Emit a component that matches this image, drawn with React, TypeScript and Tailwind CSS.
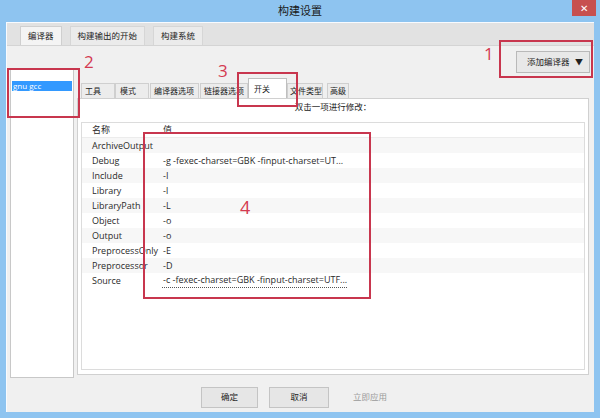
import React from "react";

const rows: [string, string][] = [
  ["ArchiveOutput", ""],
  ["Debug", "-g -fexec-charset=GBK -finput-charset=UT..."],
  ["Include", "-I"],
  ["Library", "-l"],
  ["LibraryPath", "-L"],
  ["Object", "-o"],
  ["Output", "-o"],
  ["PreprocessOnly", "-E"],
  ["Preprocessor", "-D"],
  ["Source", "-c -fexec-charset=GBK -finput-charset=UTF..."],
];

const font = { fontFamily: '"Open Sans","Noto Sans CJK SC",sans-serif' };

export default function App() {
  return (
    <div
      className="relative w-[600px] h-[418px] bg-[#8ec4f0] flex flex-col overflow-hidden text-[#222]"
      style={font}
    >
      {/* title bar */}
      <div className="h-[22px] flex items-start">
        <div className="w-[40px]" />
        <div className="flex-1 text-center text-[11px] leading-[22px] text-[#1a1a1a]">构建设置</div>
        <div className="w-[40px] h-[17px] flex justify-end pr-[4px]">
          <div className="w-[24px] h-[16px] bg-[#c7504f] flex items-center justify-center text-white text-[10px] leading-none">
            ✕
          </div>
        </div>
      </div>

      {/* body */}
      <div className="flex-1 mx-[6px] mb-[6px] bg-[#f0f0f0] border-l border-t border-[#f8fbff] flex flex-col">
        {/* top tabs */}
        <div className="h-[23px] bg-[#e2e2e2] flex items-end pl-[13px] gap-[8px] border-b border-[#d4d4d4] text-[8.5px] whitespace-nowrap">
          <div className="h-[19px] px-[7px] bg-[#f4f4f4] border border-b-0 border-[#cfcfcf] flex items-center">编译器</div>
          <div className="h-[19px] px-[7px] bg-[#ebebeb] border border-b-0 border-[#d6d6d6] flex items-center">构建输出的开始</div>
          <div className="h-[19px] px-[7px] bg-[#ebebeb] border border-b-0 border-[#d6d6d6] flex items-center">构建系统</div>
        </div>

        {/* outer panel */}
        <div className="flex-1 flex pl-[3px] pr-[3px]">
          {/* left list */}
          <div className="w-[64px] mt-[23px] mb-[2px] bg-white border border-[#c8c8c8] pt-[11px] px-[1px]">
            <div className="h-[10px] bg-[#3399ff] text-white text-[8px] leading-[10px] pl-[1px]">gnu gcc</div>
          </div>

          {/* right column */}
          <div className="flex-1 flex flex-col pl-[3px]">
            <div className="h-[27px] flex justify-end items-end pr-[1px]">
              <div className="w-[74px] h-[22px] bg-[#e8e8e8] border border-[#b9b9b9] flex items-center justify-between pl-[10px] pr-[6px] text-[8.5px]">
                <span>添加编译器</span>
                <span className="text-[8px]">▼</span>
              </div>
            </div>

            {/* inner tabs */}
            <div className="mt-[5px] h-[20px] flex items-end pl-[4px] text-[8px] whitespace-nowrap">
              <div className="h-[15px] w-[34px] bg-[#ececec] border border-b-0 border-[#cfcfcf] flex items-center pl-[3px]">工具</div>
              <div className="h-[15px] w-[34px] bg-[#ececec] border border-b-0 border-[#cfcfcf] flex items-center pl-[4px]">模式</div>
              <div className="h-[15px] w-[49px] ml-[1px] bg-[#ececec] border border-b-0 border-[#cfcfcf] flex items-center pl-[3px]">编译器选项</div>
              <div className="h-[15px] w-[48px] ml-[1px] bg-[#ececec] border border-b-0 border-[#cfcfcf] flex items-center pl-[3px]">链接器选项</div>
              <div className="h-[20px] w-[39px] bg-white border border-b-0 border-[#bfbfbf] flex items-center pl-[5px]">开关</div>
              <div className="h-[15px] w-[36px] bg-[#ececec] border border-b-0 border-[#cfcfcf] flex items-center pl-[2px]">文件类型</div>
              <div className="h-[15px] w-[22px] ml-[4px] bg-[#ececec] border border-b-0 border-[#cfcfcf] flex items-center pl-[2px]">高级</div>
            </div>

            {/* tab content */}
            <div className="flex-1 mb-[5px] mr-[2px] bg-white border border-[#d0d0d0] flex flex-col px-[3px]">
              <div className="h-[23px] text-center text-[8.5px] leading-[16px]">双击一项进行修改：</div>
              <div className="flex-1 mb-[4px] border border-[#dcdcdc] relative flex flex-col text-[9px] text-[#2a2a2a]">
                <div className="h-[15px] flex items-center border-b border-[#ececec] bg-white">
                  <div className="w-[80px] pl-[10px]">名称</div>
                  <div className="pl-[1px]">值</div>
                </div>
                {rows.map(([n, v], i) => (
                  <div
                    key={n}
                    className={"h-[15px] flex items-center whitespace-nowrap " + (i % 2 === 0 ? "bg-[#f7f7f7]" : "bg-white")}
                  >
                    <div className="w-[80px] pl-[10px] overflow-visible">{n}</div>
                    <div
                      className={
                        "pl-[1px] " + (n === "Source" ? "border-b border-dotted border-[#555]" : "")
                      }
                    >
                      {v}
                    </div>
                  </div>
                ))}
                <div className="flex-1 bg-white" />
              </div>
            </div>
          </div>
        </div>

        {/* buttons */}
        <div className="h-[32px] flex items-start pt-[7px] pl-[194px] gap-[11px] text-[8.5px]">
          <div className="w-[57px] h-[21px] bg-[#e6e6e6] border border-[#c4c4c4] flex items-center justify-center">确定</div>
          <div className="w-[60px] h-[21px] bg-[#e6e6e6] border border-[#c4c4c4] flex items-center justify-center">取消</div>
          <div className="w-[60px] h-[21px] flex items-center justify-center text-[#9a9a9a]">立即应用</div>
        </div>
      </div>

      {/* annotations */}
      <div className="absolute left-[499px] top-[40px] w-[94px] h-[38px] border-2 border-[#c8364e]" />
      <div className="absolute left-[484px] top-[45px] text-[17px] leading-none text-[#d43a50]">1</div>
      <div className="absolute left-[7px] top-[68px] w-[73px] h-[50px] border-2 border-[#c8364e]" />
      <div className="absolute left-[84px] top-[53px] text-[17px] leading-none text-[#d43a50]">2</div>
      <div className="absolute left-[237px] top-[72px] w-[61px] h-[35px] border-2 border-[#c8364e]" />
      <div className="absolute left-[218px] top-[62px] text-[17px] leading-none text-[#d43a50]">3</div>
      <div className="absolute left-[143px] top-[132px] w-[228px] h-[167px] border-2 border-[#c8364e]" />
      <div className="absolute left-[240px] top-[198px] text-[18px] leading-none text-[#d43a50]">4</div>
    </div>
  );
}
